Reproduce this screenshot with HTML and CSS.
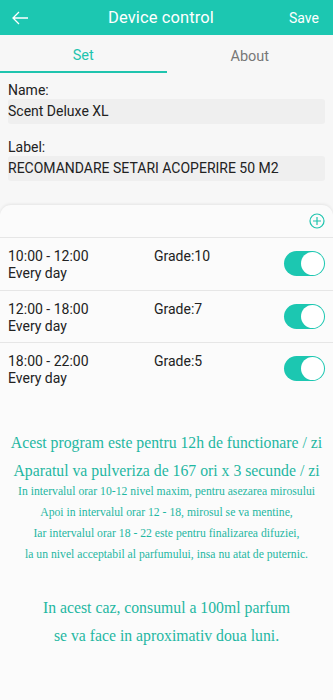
FILE: index.html
```html
<!DOCTYPE html>
<html>
<head>
<meta charset="utf-8">
<link rel="stylesheet" href="styles.css">
</head>
<body>
<div class="app">
  <header class="topbar">
    <span class="back">
      <svg width="18" height="16" viewBox="0 0 18 16"><path d="M17 8H2M8 2L2 8l6 6" fill="none" stroke="#fff" stroke-width="1.3"/></svg>
    </span>
    <span class="title">Device control</span>
    <span class="save">Save</span>
  </header>
  <nav class="tabs">
    <div class="tab active">Set</div>
    <div class="tab">About</div>
  </nav>
  <section class="form">
    <div class="label">Name:</div>
    <div class="field">Scent Deluxe XL</div>
    <div class="label">Label:</div>
    <div class="field">RECOMANDARE SETARI ACOPERIRE 50 M2</div>
  </section>
  <section class="card">
    <div class="card-head">
      <svg width="16" height="16" viewBox="0 0 16 16"><circle cx="8" cy="8" r="7" fill="none" stroke="#1fc4ae" stroke-width="1.2"/><path d="M8 4v8M4 8h8" stroke="#1fc4ae" stroke-width="1.2"/></svg>
    </div>
    <div class="row">
      <div class="time"><div>10:00 - 12:00</div><div>Every day</div></div>
      <div class="grade">Grade:10</div>
      <div class="switch"><span class="knob"></span></div>
    </div>
    <div class="row">
      <div class="time"><div>12:00 - 18:00</div><div>Every day</div></div>
      <div class="grade">Grade:7</div>
      <div class="switch"><span class="knob"></span></div>
    </div>
    <div class="row last">
      <div class="time"><div>18:00 - 22:00</div><div>Every day</div></div>
      <div class="grade">Grade:5</div>
      <div class="switch"><span class="knob"></span></div>
    </div>
    <div class="notes">
      <p class="big l1">Acest program este pentru 12h de functionare / zi</p>
      <p class="big l2">Aparatul va pulveriza de 167 ori x 3 secunde / zi</p>
      <p class="small">In intervalul orar 10-12 nivel maxim, pentru asezarea mirosului</p>
      <p class="small">Apoi in intervalul orar 12 - 18, mirosul se va mentine,</p>
      <p class="small">Iar intervalul orar 18 - 22 este pentru finalizarea difuziei,</p>
      <p class="small">la un nivel acceptabil al parfumului, insa nu atat de puternic.</p>
      <p class="big l7">In acest caz, consumul a 100ml parfum</p>
      <p class="big l8">se va face in aproximativ doua luni.</p>
    </div>
  </section>
</div>
</body>
</html>
```
FILE: styles.css
```css
* { box-sizing: border-box; }
html, body { margin: 0; padding: 0; }
body {
  background: #f7f7f7;
  font-family: Roboto, "Noto Sans", sans-serif;
  color: #222;
  width: 333px;
  height: 700px;
  overflow: hidden;
}
.app { display: flex; flex-direction: column; height: 700px; }
.topbar {
  height: 35px;
  flex: none;
  background: #1cc7b1;
  display: flex;
  align-items: center;
  justify-content: space-between;
  padding: 0 14px 0 11px;
  color: #fff;
}
.back { display: flex; width: 22px; }
.title { font-size: 16.5px; letter-spacing: 0.1px; }
.save { font-size: 14px; width: 30px; text-align: right; }
.tabs {
  display: flex;
  height: 38px;
  flex: none;
  background: #f7f7f7;
}
.tab {
  flex: 1;
  display: flex;
  align-items: center;
  justify-content: center;
  font-size: 14.5px;
  color: #777;
  padding-top: 4px;
}
.tab.active {
  color: #1fc4ae;
  border-bottom: 2px solid #1fc4ae;
}
.form { padding: 9px 8px 24px; flex: none; }
.label { font-size: 14px; line-height: 16px; color: #222; margin-bottom: 1px; }
.field {
  background: #efefef;
  border-radius: 3px;
  height: 25px;
  line-height: 25px;
  font-size: 14px;
  color: #222;
  margin-bottom: 15px;
}
.field:last-child { margin-bottom: 0; }
.card {
  background: #fbfbfb;
  border-radius: 11px 11px 0 0;
  box-shadow: 0 -1px 3px rgba(0,0,0,0.08);
  flex: 1;
}
.card-head {
  height: 33px;
  display: flex;
  justify-content: flex-end;
  align-items: center;
  padding: 0 8px;
  border-bottom: 1px solid #e6e6e6;
}
.row {
  height: 52.5px;
  display: flex;
  align-items: flex-start;
  padding: 10px 8px 0;
  border-bottom: 1px solid #e6e6e6;
  font-size: 14px;
}
.row.last { border-bottom: none; }
.time { width: 146px; line-height: 17px; }
.grade { flex: 1; line-height: 17px; }
.switch {
  width: 41px;
  height: 25px;
  margin-top: 3px;
  border-radius: 13px;
  background: #1cc7b1;
  position: relative;
}
.knob {
  position: absolute;
  right: 1px;
  top: 1px;
  width: 23px;
  height: 23px;
  border-radius: 50%;
  background: #fff;
}
.notes {
  font-family: "Liberation Serif", "Times New Roman", serif;
  color: #1fb7a2;
  text-align: center;
  padding-top: 33px;
}
.notes p { margin: 0; white-space: nowrap; }
.big { font-size: 15.75px; line-height: 28px; }
.small { font-size: 11.7px; line-height: 21px; }
.l2 { margin-bottom: -4px !important; }
.l7 { margin-top: 29px !important; }
```
